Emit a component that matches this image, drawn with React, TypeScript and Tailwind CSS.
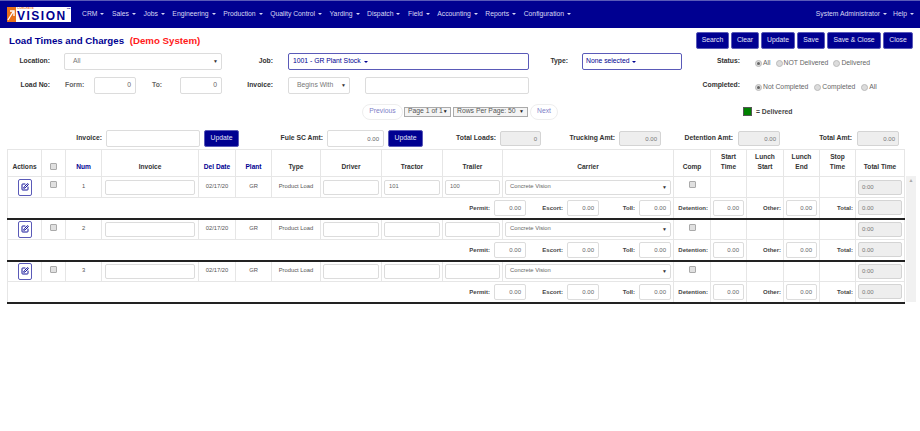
import { SquarePen } from 'lucide-react'

const navItems = ['CRM', 'Sales', 'Jobs', 'Engineering', 'Production', 'Quality Control', 'Yarding', 'Dispatch', 'Field', 'Accounting', 'Reports', 'Configuration']
const actions = [
  { text: 'Search', width: 'w-[33px]' },
  { text: 'Clear', width: 'w-[28px]' },
  { text: 'Update', width: 'w-[34px]' },
  { text: 'Save', width: 'w-[28px]' },
  { text: 'Save & Close', width: 'w-[54px]' },
  { text: 'Close', width: 'w-[30px]' },
]
const colWidths = [34, 24, 36, 97, 37, 36, 49, 61, 61, 60, 171, 37, 36, 37, 36, 36, 49]

const rows = [
  { num: 1, tractor: '101', trailer: '100' },
  { num: 2, tractor: '', trailer: '' },
  { num: 3, tractor: '', trailer: '' },
]

function Caret() {
  return <span className="inline-block ml-[3px] align-middle border-x-[2px] border-t-[2px] border-x-transparent border-t-current" />
}

function Field({ value = '', className = '', right = false }: { value?: string; className?: string; right?: boolean }) {
  return (
    <div className={`h-[17px] flex items-center px-[4px] border border-[#dcdcdc] rounded-[2px] bg-white text-[#666] ${right ? 'justify-end' : ''} ${className}`}>
      {value}
    </div>
  )
}

function ReadOnly({ value, className = '', right = false }: { value: string; className?: string; right?: boolean }) {
  return (
    <div className={`h-[15px] flex items-center px-[3px] border border-[#d4d4d4] rounded-[2px] bg-[#eeeeee] text-[#777] text-[6px] ${right ? 'justify-end' : ''} ${className}`}>
      {value}
    </div>
  )
}

function SelectBox({ value, className = '' }: { value: string; className?: string }) {
  return (
    <div className={`h-[17px] flex items-center justify-between pl-[8px] pr-[3px] border border-[#dcdcdc] rounded-[2px] bg-white text-[#777] ${className}`}>
      <span>{value}</span>
      <span className="text-[5px] text-[#333]">▼</span>
    </div>
  )
}

function Radio({ label, checked = false }: { label: string; checked?: boolean }) {
  return (
    <span className="flex items-center gap-[1px] text-[#666] whitespace-nowrap">
      <span className="w-[7px] h-[7px] rounded-full bg-[#dcdcdc] border border-[#bbb] flex items-center justify-center">
        {checked && <span className="w-[3px] h-[3px] rounded-full bg-[#666]" />}
      </span>
      {label}
    </span>
  )
}

function Check() {
  return <span className="block w-[7px] h-[7px] bg-[#e0e0e0] border border-[#aaa] rounded-[1px]" />
}

function Label({ text, className = '' }: { text: string; className?: string }) {
  return <span className={`font-bold text-[#333] text-right whitespace-nowrap ${className}`}>{text}</span>
}

function Button({ text, className = '' }: { text: string; className?: string }) {
  return <div className={`h-[17px] flex items-center justify-center bg-[#000091] border border-[#5a5ab8] rounded-[2px] text-[#e4e4f8] ${className}`}>{text}</div>
}

function HeaderCell({ children, blue = false }: { children: React.ReactNode; blue?: boolean }) {
  return (
    <th className={`border border-[#e6e6e6] align-bottom pb-[4px] text-center font-bold text-[6.6px] leading-[10px] ${blue ? 'text-[#000091]' : 'text-[#333]'}`}>
      {children}
    </th>
  )
}

function Charge({ label, labelWidth }: { label: string; labelWidth: string }) {
  return (
    <div className="flex items-center">
      <span className={`font-bold text-[#444] text-right mr-[4px] ${labelWidth}`}>{label}</span>
      <Field value="0.00" right className="w-[32px] text-[6px] h-[16px]!" />
    </div>
  )
}

export default function App() {
  return (
    <div className="w-[920px] h-[431px] overflow-hidden bg-white text-[6.8px] leading-none" style={{ fontFamily: '"Liberation Sans", Arial, sans-serif' }}>
      <nav className="h-[28px] bg-[#000091] border-t border-[#5a5ab8] flex items-center pl-[7px] pr-[6px] text-[#d8d8f4] text-[6.8px]">
        <div className="w-[64px] h-[15px] bg-white flex items-center overflow-hidden">
          <svg width="9" height="15" viewBox="0 0 9 15" className="shrink-0">
            <rect width="9" height="15" fill="#e8701a" />
            <path d="M1 13 L6 5 M3 4 H7 V9" stroke="#fff" strokeWidth="1.4" fill="none" />
          </svg>
          <div className="flex flex-col h-[15px]">
            <span className="h-[3px] pl-[1px] text-[3px] leading-[3px] font-bold text-[#e8701a]">CONCRETE</span>
            <span className="pl-[1px] text-[12px] leading-[12px] font-bold tracking-[1.5px] text-[#000091]">VISION</span>
          </div>
          <span className="self-start mt-[1px] text-[2.5px] font-bold text-[#000091]">TM</span>
        </div>
        <div className="ml-[11px] flex items-center gap-[7.5px]">
          {navItems.map((item) => (
            <span key={item} className="whitespace-nowrap">{item}<Caret /></span>
          ))}
        </div>
        <div className="ml-auto flex items-center gap-[6px]">
          <span>System Administrator<Caret /></span>
          <span>Help<Caret /></span>
        </div>
      </nav>

      <div className="flex items-center justify-between pl-[9px] pr-[7px] pt-[4px] h-[21px]">
        <div className="text-[9.7px] font-bold text-[#000091]">
          Load Times and Charges <span className="ml-[3px] text-[#ff1a1a]">(Demo System)</span>
        </div>
        <div className="flex gap-[2px]">
          {actions.map((a) => (
            <Button key={a.text} text={a.text} className={a.width} />
          ))}
        </div>
      </div>

      <div className="mt-[4px] flex items-center h-[17px]">
        <Label text="Location:" className="w-[50px]" />
        <SelectBox value="All" className="ml-[14px] w-[158px]" />
        <Label text="Job:" className="w-[51px]" />
        <div className="ml-[15px] w-[241px] h-[17px] flex items-center pl-[4px] border border-[#5a5ab8] rounded-[2px] text-[#000091]">1001 - GR Plant Stock<Caret /></div>
        <Label text="Type:" className="w-[39px]" />
        <div className="ml-[14px] w-[100px] h-[17px] flex items-center pl-[3px] border border-[#5a5ab8] rounded-[2px] text-[#000091]">None selected<Caret /></div>
        <Label text="Status:" className="w-[58px]" />
        <div className="ml-[15px] mt-[3px] flex gap-[5px]">
          <Radio label="All" checked />
          <Radio label="NOT Delivered" />
          <Radio label="Delivered" />
        </div>
      </div>

      <div className="mt-[7px] flex items-center h-[17px]">
        <Label text="Load No:" className="w-[50px]" />
        <span className="ml-[15px] w-[29px] font-bold text-[#666]">Form:</span>
        <Field value="0" right className="w-[42px]" />
        <span className="ml-[16px] w-[28px] font-bold text-[#666]">To:</span>
        <Field value="0" right className="w-[42px]" />
        <Label text="Invoice:" className="w-[51px]" />
        <SelectBox value="Begins With" className="ml-[15px] w-[62px]" />
        <Field className="ml-[15px] w-[164px]" />
        <Label text="Completed:" className="w-[211px]" />
        <div className="ml-[15px] mt-[3px] flex gap-[6px]">
          <Radio label="Not Completed" checked />
          <Radio label="Completed" />
          <Radio label="All" />
        </div>
      </div>

      <div className="mt-[9px] flex items-center h-[17px] whitespace-nowrap">
        <div className="ml-[362px] h-[16px] w-[41px] flex items-center justify-center border border-[#eee] rounded-full text-[#8080c8]">Previous</div>
        <div className="ml-[1px] h-[10px] w-[47px] flex items-center justify-between px-[3px] bg-[#f4f4f4] border border-[#aaa] text-[#555]">Page 1 of 1<span className="text-[5px] text-[#222]">▼</span></div>
        <div className="ml-[2px] h-[10px] w-[75px] flex items-center justify-between px-[3px] bg-[#f4f4f4] border border-[#aaa] text-[#555]">Rows Per Page: 50<span className="text-[5px] text-[#222]">▼</span></div>
        <div className="ml-[2px] h-[16px] w-[28px] flex items-center justify-center border border-[#eee] rounded-full text-[#8080c8]">Next</div>
        <div className="ml-[185px] w-[9px] h-[9px] bg-[#008000] border border-[#555]" />
        <span className="ml-[4px] mt-[1px] font-bold text-[#444]">= Delivered</span>
      </div>

      <div className="mt-[10px] flex items-center h-[17px]">
        <Label text="Invoice:" className="w-[102px]" />
        <Field className="ml-[4px] w-[94px]" />
        <Button text="Update" className="ml-[4px] w-[35px]" />
        <Label text="Fule SC Amt:" className="w-[84px]" />
        <Field value="0.00" right className="ml-[4px] w-[57px] text-[6px]" />
        <Button text="Update" className="ml-[4px] w-[35px]" />
        <Label text="Total Loads:" className="w-[73px]" />
        <ReadOnly value="0" right className="ml-[4px] w-[41px]" />
        <Label text="Trucking Amt:" className="w-[74px]" />
        <ReadOnly value="0.00" right className="ml-[4px] w-[42px]" />
        <Label text="Detention Amt:" className="w-[72px]" />
        <ReadOnly value="0.00" right className="ml-[5px] w-[42px]" />
        <Label text="Total Amt:" className="w-[72px]" />
        <ReadOnly value="0.00" right className="ml-[5px] w-[42px]" />
      </div>

      <div className="mt-[2px] pl-[7px] flex items-start">
        <table className="table-fixed border-collapse w-[897px]">
          <colgroup>
            {colWidths.map((w, i) => (
              <col key={i} style={{ width: w }} />
            ))}
          </colgroup>
          <thead>
            <tr className="h-[27px]">
              <HeaderCell>Actions</HeaderCell>
              <HeaderCell><span className="flex justify-center pb-[2px]"><Check /></span></HeaderCell>
              <HeaderCell blue>Num</HeaderCell>
              <HeaderCell>Invoice</HeaderCell>
              <HeaderCell blue>Del Date</HeaderCell>
              <HeaderCell blue>Plant</HeaderCell>
              <HeaderCell>Type</HeaderCell>
              <HeaderCell>Driver</HeaderCell>
              <HeaderCell>Tractor</HeaderCell>
              <HeaderCell>Trailer</HeaderCell>
              <HeaderCell>Carrier</HeaderCell>
              <HeaderCell>Comp</HeaderCell>
              <HeaderCell>Start<br />Time</HeaderCell>
              <HeaderCell>Lunch<br />Start</HeaderCell>
              <HeaderCell>Lunch<br />End</HeaderCell>
              <HeaderCell>Stop<br />Time</HeaderCell>
              <HeaderCell>Total Time</HeaderCell>
            </tr>
          </thead>
          <tbody>
            {rows.map((r) => [
              <tr key={`main-${r.num}`} className="h-[21px] text-[#555] text-center text-[5.8px]">
                <td className="border border-[#e6e6e6]">
                  <div className="mx-auto w-[14px] h-[17px] border border-[#5a5ab8] rounded-[2px] flex items-center justify-center text-[#000091]">
                    <SquarePen size={8} strokeWidth={2.8} />
                  </div>
                </td>
                <td className="border border-[#e6e6e6] align-top pt-[4px]"><span className="flex justify-center"><Check /></span></td>
                <td className="border border-[#e6e6e6]">{r.num}</td>
                <td className="border border-[#e6e6e6] px-[3px]"><Field className="h-[15px]!" /></td>
                <td className="border border-[#e6e6e6]">02/17/20</td>
                <td className="border border-[#e6e6e6]">GR</td>
                <td className="border border-[#e6e6e6] whitespace-nowrap">Product Load</td>
                <td className="border border-[#e6e6e6] px-[2px]"><Field className="h-[15px]!" /></td>
                <td className="border border-[#e6e6e6] px-[2px]"><Field value={r.tractor} className="h-[15px]!" /></td>
                <td className="border border-[#e6e6e6] px-[2px]"><Field value={r.trailer} className="h-[15px]!" /></td>
                <td className="border border-[#e6e6e6] px-[2px]">
                  <div className="h-[15px] flex items-center justify-between pl-[4px] pr-[3px] border border-[#dcdcdc] rounded-[2px] text-[#666]">
                    <span>Concrete Vision</span>
                    <span className="text-[5px] text-[#333]">▼</span>
                  </div>
                </td>
                <td className="border border-[#e6e6e6] align-top pt-[4px]"><span className="flex justify-center"><Check /></span></td>
                <td className="border border-[#e6e6e6]" />
                <td className="border border-[#e6e6e6]" />
                <td className="border border-[#e6e6e6]" />
                <td className="border border-[#e6e6e6]" />
                <td className="border border-[#e6e6e6] px-[2px]"><ReadOnly value="0:00" /></td>
              </tr>,
              <tr key={`sub-${r.num}`} className="h-[21px] text-[6px] border-b-[2px] border-b-[#222]">
                <td colSpan={11} className="border-x border-[#e6e6e6]">
                  <div className="flex justify-end pr-[2px]">
                    <Charge label="Permit:" labelWidth="w-[30px]" />
                    <Charge label="Escort:" labelWidth="w-[37px]" />
                    <Charge label="Toll:" labelWidth="w-[36px]" />
                  </div>
                </td>
                <td className="border-x border-[#e6e6e6] text-right font-bold text-[#444] pr-[2px]">Detention:</td>
                <td className="border-x border-[#e6e6e6] px-[2px]"><Field value="0.00" right className="h-[16px]!" /></td>
                <td className="border-x border-[#e6e6e6] text-right font-bold text-[#444] pr-[2px]">Other:</td>
                <td className="border-x border-[#e6e6e6] px-[2px]"><Field value="0.00" right className="h-[16px]!" /></td>
                <td className="border-x border-[#e6e6e6] text-right font-bold text-[#444] pr-[2px]">Total:</td>
                <td className="border-x border-[#e6e6e6] px-[2px]"><ReadOnly value="0.00" /></td>
              </tr>,
            ])}
          </tbody>
        </table>
        <div className="mt-[27px] ml-[1px] w-[10px] h-[126px] bg-[#f1f1f1] flex justify-center pt-[2px] text-[5px] text-[#aaa]">▲</div>
      </div>
    </div>
  )
}
